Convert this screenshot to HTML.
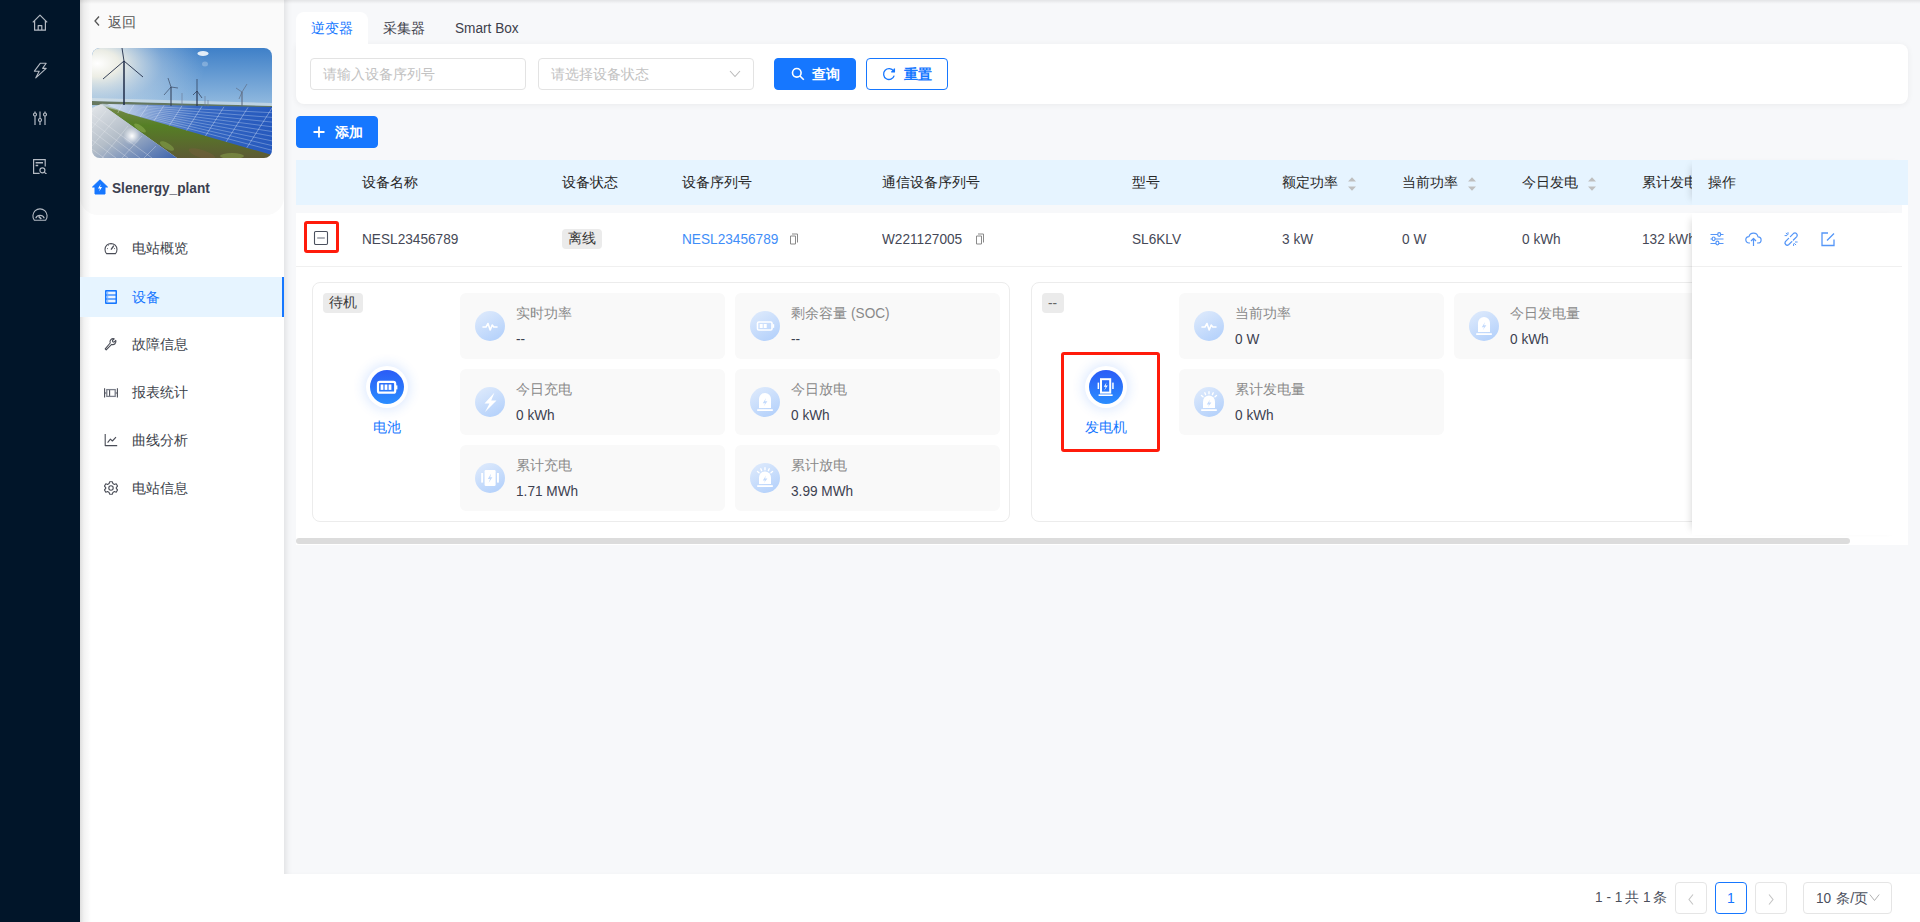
<!DOCTYPE html>
<html><head><meta charset="utf-8">
<style>
*{box-sizing:border-box;margin:0;padding:0}
html,body{width:1920px;height:922px;overflow:hidden}
body{font-family:"Liberation Sans",sans-serif;font-size:14px;color:#333;background:#f7f8fa;position:relative}
.abs{position:absolute}
.l{display:inline-block;font-size:15.5px;transform:scaleX(.88);transform-origin:0 50%;white-space:nowrap}
#dark{left:0;top:0;width:80px;height:922px;background:#011529}
#dark svg{position:absolute;left:32px;width:16px;height:16px}
#panel{left:80px;top:0;width:204px;height:922px;background:#fff}
#pshadow{left:80px;top:0;width:12px;height:922px;background:linear-gradient(90deg,rgba(0,0,0,.13),rgba(0,0,0,.05) 4px,rgba(0,0,0,0) 11px)}
#topblk{left:80px;top:0;width:204px;height:215px;background:#fafafa;border-radius:0 0 18px 18px}
#content{left:284px;top:0;width:1636px;height:874px;background:#f7f8fa;box-shadow:inset 6px 0 6px -4px rgba(0,0,0,.10)}
#topshadow{left:80px;top:0;width:1840px;height:4px;background:linear-gradient(rgba(0,0,0,.07),rgba(0,0,0,0))}
#footer{left:284px;top:874px;width:1636px;height:48px;background:#fff}
.menu{position:absolute;left:80px;width:204px;height:40px}
.menu .t{position:absolute;left:52px;top:0;line-height:40px;font-size:14px;color:#3c3f4a}
.menu svg{position:absolute;left:24px;top:13px;width:14px;height:14px}
.menu.sel{background:#e6f4ff;border-right:2px solid #1677ff}
.menu.sel .t{color:#1677ff}
.card{background:#fff;border-radius:8px}
.inp{position:absolute;border:1px solid #e3e3e3;border-radius:4px;background:#fff;height:32px}
.inp .ph{position:absolute;left:12px;top:0;line-height:30px;color:#c2c2c2;font-size:14px}
.btn{position:absolute;height:32px;border-radius:4px;line-height:30px;font-size:14px}
.th{position:absolute;top:160px;line-height:45px;font-size:14px;color:#262626}
.td{position:absolute;top:213px;line-height:52px;font-size:14px;color:#454856}
.sort{display:inline-block;position:absolute;width:8px;height:14px}
.mbox{position:absolute;width:265px;height:66px;background:#f9f9f9;border-radius:6px}
.mbox .ic{position:absolute;left:15px;top:18px;width:30px;height:30px;border-radius:50%;background:linear-gradient(150deg,#dce9fc 10%,#b4d1fb 90%)}
.mbox .ic svg{position:absolute;left:0;top:0;width:30px;height:30px}
.mbox .lb{position:absolute;left:56px;top:10px;line-height:20px;color:#8a8a8a;font-size:14px}
.mbox .vl{position:absolute;left:56px;top:36px;line-height:20px;color:#3c4150;font-size:14px}
.tag{position:absolute;height:20px;background:#ebebeb;border-radius:4px;line-height:19px;font-size:14px;color:#3a3a3a;text-align:center}
.bigic{position:absolute;width:42px;height:42px;border-radius:50%;background:#fff;box-shadow:0 0 12px 2px rgba(40,120,255,.16)}
.bigic .in{position:absolute;left:4px;top:4px;width:34px;height:34px;border-radius:50%;background:linear-gradient(180deg,#2b5cf6,#2a8dff)}
.pg{position:absolute;top:882px;height:32px;border:1px solid #e5e5e5;border-radius:4px;background:#fff;text-align:center;line-height:30px}
</style></head><body>

<div id="dark" class="abs">
<svg style="top:14px;overflow:visible" viewBox="0 0 16 16" fill="none" stroke="#b4bac3" stroke-width="1.2" stroke-linejoin="round"><path d="M0.8 8.4 L8 1.2 L15.2 8.4 M2.6 6.8 V16.2 H13.4 V6.8 M6.2 16.2 V11.6 H9.8 V16.2"/></svg>
<svg style="top:62px;overflow:visible" viewBox="0 0 16 16" fill="none" stroke="#b4bac3" stroke-width="1.1" stroke-linejoin="round"><path d="M8.4 1.2 H14.2 L10.6 6.4 H14.2 L3.8 15.8 L7.2 9.2 H2.4 Z"/></svg>
<svg style="top:110px" viewBox="0 0 16 16" fill="none" stroke="#b4bac3" stroke-width="1.2"><path d="M3 1.5V15 M8 1.5V15 M13 1.5V15"/><circle cx="3" cy="4.5" r="1.5" fill="#011529"/><circle cx="8" cy="10" r="1.5" fill="#011529"/><circle cx="13" cy="4.5" r="1.5" fill="#011529"/></svg>
<svg style="top:158px" viewBox="0 0 16 16" fill="none" stroke="#b4bac3" stroke-width="1.2"><path d="M7.6 15.4H1.6V1.6H13.2V8.6"/><path d="M3.6 4.8H11 M3.6 7.6H6.2" stroke-width="1.5"/><circle cx="10.4" cy="12.3" r="2.5"/><path d="M12.2 14.1L14.6 16.2"/></svg>
<svg style="top:206px" viewBox="0 0 16 16" fill="none" stroke="#b4bac3" stroke-width="1.1"><path d="M2.3 14.2 A7.1 7.1 0 1 1 13.7 14.2 Z"/><path d="M3.7 12.2 A4.7 4.7 0 0 1 12.3 12.2"/><path d="M9.3 13 L6.6 10.4" stroke-width="1.6"/></svg>
</div>
<div id="panel" class="abs"></div>
<div id="topblk" class="abs"></div>
<div id="content" class="abs"></div>
<div id="topshadow" class="abs"></div>
<div id="pshadow" class="abs"></div>
<div id="footer" class="abs"></div>
<!-- sidebar content -->
<svg class="abs" style="left:93px;top:15px;width:8px;height:12px" viewBox="0 0 8 12" fill="none" stroke="#555" stroke-width="1.3"><path d="M6 1.5 L2 6 L6 10.5"/></svg>
<div class="abs" style="left:108px;top:12px;line-height:20px;font-size:14px;color:#555">返回</div>
<div class="abs" style="left:92px;top:48px;width:180px;height:110px;border-radius:8px;overflow:hidden">
<svg width="180" height="110" viewBox="0 0 180 110">
<defs>
<linearGradient id="sky" x1="0" y1="0" x2="0" y2="1"><stop offset="0" stop-color="#3f80c8"/><stop offset=".5" stop-color="#8fb8de"/><stop offset="1" stop-color="#e0e8ea"/></linearGradient>
<radialGradient id="sun" cx="0.03" cy="0.14" r="0.6"><stop offset="0" stop-color="#ffffff"/><stop offset=".2" stop-color="#f4f2e6" stop-opacity=".95"/><stop offset=".6" stop-color="#dfe6ea" stop-opacity=".35"/><stop offset="1" stop-color="#cfe0ee" stop-opacity="0"/></radialGradient>
<linearGradient id="pan1" x1="0" y1="0" x2="1" y2="1"><stop offset="0" stop-color="#e4e7ea"/><stop offset=".45" stop-color="#b3bdc8"/><stop offset=".8" stop-color="#6683b6"/><stop offset="1" stop-color="#3f64ad"/></linearGradient>
<linearGradient id="pan2" x1="0" y1="0" x2="1" y2="0"><stop offset="0" stop-color="#cdd8e6"/><stop offset=".25" stop-color="#7a9ad0"/><stop offset=".55" stop-color="#3567c2"/><stop offset="1" stop-color="#2659bd"/></linearGradient>
<linearGradient id="grn" x1="0" y1="0" x2="0" y2="1"><stop offset="0" stop-color="#7a8a50"/><stop offset=".4" stop-color="#557f25"/><stop offset="1" stop-color="#5d5a34"/></linearGradient>
</defs>
<rect width="180" height="110" fill="url(#sky)"/>
<rect width="180" height="110" fill="url(#sun)"/>
<g fill="#fff"><ellipse cx="111" cy="5.5" rx="5.5" ry="2.5" opacity=".85"/><ellipse cx="113" cy="16" rx="3" ry="2.5" opacity=".25"/></g>
<path d="M0 53 L180 58 L180 61 L0 57Z" fill="#5a6a48" opacity=".85"/><path d="M0 50 L180 55 L180 58 L0 53Z" fill="#e8ecea" opacity=".5"/>
<path d="M9 56 L34 64 L180 106 L180 110 L85 110 Z" fill="url(#grn)"/>
<ellipse cx="48" cy="80" rx="7" ry="2.5" fill="#9cbc5a" opacity=".45" transform="rotate(35 48 80)"/><ellipse cx="75" cy="98" rx="8" ry="3" fill="#93b452" opacity=".45" transform="rotate(30 75 98)"/><ellipse cx="110" cy="106" rx="14" ry="4" fill="#7c5f3e" opacity=".4" transform="rotate(18 110 106)"/><ellipse cx="140" cy="108" rx="12" ry="3" fill="#92b04e" opacity=".45"/>
<path d="M15 56 L180 59 L180 107 L34 65 Z" fill="url(#pan2)"/>
<path d="M9.6 56.1 L180 64.7 M9.6 56.3 L180 69.4 M9.6 56.5 L180 74.1 M9.6 56.7 L180 78.8 M9.6 56.9 L180 83.5 M9.6 57.2 L180 88.2 M9.6 57.4 L180 92.9 M9.6 57.6 L180 97.6 M9.6 57.8 L180 102.3 " stroke="#d8e6fa" stroke-width=".45" opacity=".75" fill="none"/>
<path d="M30.0 56.4 L25.8 65.0 M42.0 56.7 L36.1 65.6 M56.0 57.0 L48.2 69.1 M72.0 57.4 L61.9 73.0 M90.0 57.8 L77.4 77.5 M110.0 58.3 L94.6 82.4 M132.0 58.8 L113.5 87.9 M156.0 59.4 L134.2 93.8 M180.0 60.0 L154.8 99.8 " stroke="#e2ecfb" stroke-width=".5" opacity=".8" fill="none"/>
<path d="M0 60 L9 56 L85 110 L0 110 Z" fill="url(#pan1)"/>
<path d="M0 66 L60 110 M0 74 L48 110 M0 83 L36 110 M0 92 L24 110 M0 101 L12 110 M4 58 L0 64 M14 63 L0 80 M24 70 L0 98 M36 78 L10 110 M50 88 L30 110 M64 98 L52 110" stroke="#eef2f6" stroke-width=".45" opacity=".7" fill="none"/>
<radialGradient id="glare" cx=".5" cy=".5" r=".5"><stop offset="0" stop-color="#fff"/><stop offset="1" stop-color="#fff" stop-opacity="0"/></radialGradient>
<circle cx="40" cy="88" r="9" fill="url(#glare)"/>
<g fill="none">
<path d="M32 13 V57" stroke="#1f2d48" stroke-width="1.5"/><path d="M32 13 L30 0 M32 13 L11 31 M32 13 L51 29" stroke="#1f2d48" stroke-width=".9"/>
<path d="M79 39 V58" stroke="#2f3b52" stroke-width="1"/><path d="M79 39 L76 30 M79 39 L72 47 M79 39 L86 40" stroke="#2f3b52" stroke-width=".6"/>
<path d="M105 43 V58" stroke="#2a3650" stroke-width="1.2"/><path d="M105 43 L105 31 M105 43 L101 47 M105 43 L110 50" stroke="#2a3650" stroke-width=".7"/>
<path d="M150 44 V58" stroke="#5a6578" stroke-width="1"/><path d="M150 44 L155 36 M150 44 L144 40 M150 44 L147 51" stroke="#5a6578" stroke-width=".6"/>
<path d="M113 48 V59 M90 45 V58 M116 52 V59" stroke="#6a7590" stroke-width=".6"/>
</g>
</svg></div>
<svg class="abs" style="left:92px;top:179px;width:16px;height:16px" viewBox="0 0 16 16"><path d="M8 0.8 L15.5 8 H13 V15 H3 V8 H0.5 Z" fill="#1677ff" stroke="#1677ff" stroke-width="1" stroke-linejoin="round"/><path d="M8.8 5 L6 9.5 H8 L7.2 12.5 L10 8 H8 Z" fill="#fff"/></svg>
<div class="abs" style="left:112px;top:178px;line-height:20px;font-size:14px;font-weight:bold;color:#3c4150"><span class="l">Slenergy_plant</span></div>

<div class="menu" style="top:228px"><svg viewBox="0 0 14 14" fill="none" stroke="#4a4d57" stroke-width="1.1"><path d="M2.6 12.6 A6 6 0 1 1 11.4 12.6 Z"/><path d="M7 8.6 L9.6 5" stroke-width="1.3"/><path d="M3.2 7.6H4 M4.3 4.3L4.8 4.8 M7 2.8V3.5 M9.8 4.3L9.3 4.8 M10 7.6H10.8" stroke-width="1"/></svg><div class="t">电站概览</div></div>
<div class="menu sel" style="top:277px"><svg viewBox="0 0 14 14"><rect x="1" y="0" width="12" height="14" rx="1" fill="#1677ff"/><rect x="2.5" y="1.6" width="9" height="2.8" fill="#ffffff" opacity=".92"/><rect x="2.5" y="5.6" width="9" height="2.8" fill="#ffffff" opacity=".92"/><rect x="2.5" y="9.6" width="9" height="2.8" fill="#ffffff" opacity=".92"/><rect x="3.2" y="2.5" width="1" height="1" fill="#1677ff"/><rect x="3.2" y="6.5" width="1" height="1" fill="#1677ff"/><rect x="3.2" y="10.5" width="1" height="1" fill="#1677ff"/></svg><div class="t">设备</div></div>
<div class="menu" style="top:324px"><svg viewBox="0 0 14 14" fill="none" stroke="#4a4d57" stroke-width="1.1" stroke-linejoin="round"><path d="M1.2 11.8 L2.2 12.8 L7.6 7.4 A3.2 3.2 0 0 0 11.8 3.4 L10 5.2 L8.8 4.8 L8.4 3.6 L10.2 1.8 A3.2 3.2 0 0 0 6.2 6 Z"/></svg><div class="t">故障信息</div></div>
<div class="menu" style="top:372px"><svg viewBox="0 0 14 14" fill="none" stroke="#4a4d57" stroke-width="1.1"><path d="M0.6 3.2V12.6 M13.4 3.2V12.6 M0.6 8H2.8 M11.2 8H13.4 M5.6 4.6V11.4"/><rect x="2.8" y="4.6" width="8.4" height="6.8" stroke="#7d818c" stroke-width="1.3"/></svg><div class="t">报表统计</div></div>
<div class="menu" style="top:420px"><svg viewBox="0 0 14 14" fill="none" stroke="#4a4d57" stroke-width="1.1" stroke-linejoin="round"><path d="M1.2 1V12.6H13.2 M3.6 9.6 L6.4 6.2 L8.4 8 L12 4.2"/></svg><div class="t">曲线分析</div></div>
<div class="menu" style="top:468px"><svg viewBox="0 0 14 14" fill="none" stroke="#4a4d57" stroke-width="1.1" stroke-linejoin="round"><path d="M5.6 0.8H8.4L8.9 2.6L10.4 3.4L12.2 2.8L13.6 5.2L12.3 6.5V7.5L13.6 8.8L12.2 11.2L10.4 10.6L8.9 11.4L8.4 13.2H5.6L5.1 11.4L3.6 10.6L1.8 11.2L0.4 8.8L1.7 7.5V6.5L0.4 5.2L1.8 2.8L3.6 3.4L5.1 2.6Z"/><circle cx="7" cy="7" r="2.2"/></svg><div class="t">电站信息</div></div>


<!-- main content -->
<div class="abs card" style="left:296px;top:44px;width:1612px;height:60px;border-radius:0 8px 8px 8px;box-shadow:0 1px 6px rgba(0,0,0,.06)"></div>
<div class="abs card" style="left:296px;top:12px;width:72px;height:44px;border-radius:8px 8px 0 0"></div>
<div class="abs" style="left:311px;top:18px;line-height:20px;color:#1677ff">逆变器</div>
<div class="abs" style="left:383px;top:18px;line-height:20px;color:#3d404b">采集器</div>
<div class="abs" style="left:455px;top:18px;line-height:20px;color:#3d404b"><span class="l">Smart Box</span></div>
<div class="inp" style="left:310px;top:58px;width:216px"><div class="ph">请输入设备序列号</div></div>
<div class="inp" style="left:538px;top:58px;width:216px"><div class="ph">请选择设备状态</div>
<svg class="abs" style="left:190px;top:11px;width:12px;height:8px" viewBox="0 0 12 8" fill="none" stroke="#bbb" stroke-width="1.1"><path d="M1 1 L6 6.5 L11 1"/></svg></div>
<div class="btn" style="left:774px;top:58px;width:82px;background:#1677ff;border:1px solid #1677ff;color:#fff">
<svg class="abs" style="left:16px;top:8px;width:14px;height:14px" viewBox="0 0 14 14" fill="none" stroke="#fff" stroke-width="1.6"><circle cx="5.8" cy="5.8" r="4.3"/><path d="M9 9 L12.8 12.8"/></svg>
<span class="abs" style="left:37px;top:0;font-weight:600">查询</span></div>
<div class="btn" style="left:866px;top:58px;width:82px;background:#fff;border:1px solid #1677ff;color:#1677ff">
<svg class="abs" style="left:15px;top:8px;width:14px;height:14px" viewBox="0 0 14 14" fill="none" stroke="#1677ff" stroke-width="1.3"><path d="M11.6 4.2 A5.4 5.4 0 1 0 12.2 8.6"/><path d="M12.4 1.6 V4.9 H9.2" fill="#1677ff" stroke-linejoin="round"/></svg>
<span class="abs" style="left:37px;top:0;font-weight:600">重置</span></div>

<div class="btn" style="left:296px;top:116px;width:82px;background:#1677ff;border:1px solid #1677ff;color:#fff">
<svg class="abs" style="left:16px;top:9px;width:12px;height:12px" viewBox="0 0 12 12" fill="none" stroke="#fff" stroke-width="1.8"><path d="M6 0.5V11.5 M0.5 6H11.5"/></svg>
<span class="abs" style="left:38px;top:0;font-weight:600">添加</span></div>

<!-- table -->
<div class="abs" style="left:296px;top:160px;width:1612px;height:45px;background:#e6f4ff"></div>
<div class="abs" style="left:296px;top:213px;width:1606px;height:54px;background:#fff;border-bottom:1px solid #f0f0f0"></div>
<div class="abs" style="left:296px;top:267px;width:1606px;height:278px;background:#fff"></div>
<div class="abs" style="left:1902px;top:205px;width:6px;height:340px;background:#fff"></div>
<div class="th" style="left:362px">设备名称</div>
<div class="th" style="left:562px">设备状态</div>
<div class="th" style="left:682px">设备序列号</div>
<div class="th" style="left:882px">通信设备序列号</div>
<div class="th" style="left:1132px">型号</div>
<div class="th" style="left:1282px">额定功率</div>
<div class="th" style="left:1402px">当前功率</div>
<div class="th" style="left:1522px">今日发电</div>
<div class="th" style="left:1642px">累计发电量</div>
<svg class="abs" style="left:1347px;top:176px;width:10px;height:16px" viewBox="0 0 10 16"><path d="M5 1.2 L9 5.6 H1Z M5 14.8 L9 10.4 H1Z" fill="#bfbfbf"/></svg>
<svg class="abs" style="left:1467px;top:176px;width:10px;height:16px" viewBox="0 0 10 16"><path d="M5 1.2 L9 5.6 H1Z M5 14.8 L9 10.4 H1Z" fill="#bfbfbf"/></svg>
<svg class="abs" style="left:1587px;top:176px;width:10px;height:16px" viewBox="0 0 10 16"><path d="M5 1.2 L9 5.6 H1Z M5 14.8 L9 10.4 H1Z" fill="#bfbfbf"/></svg>

<div class="abs" style="left:304px;top:221px;width:35px;height:32px;border:3px solid #ff1b0b;border-radius:3px"></div>
<svg class="abs" style="left:313px;top:230px;width:16px;height:16px" viewBox="0 0 16 16" fill="none" stroke="#4b505e" stroke-width="1.1"><rect x="1.5" y="1.5" width="13" height="13" rx="1.2"/><path d="M4.2 8H11.8" stroke="#858a96" stroke-width="1.3"/></svg>
<div class="td" style="left:362px"><span class="l">NESL23456789</span></div>
<div class="tag" style="left:562px;top:229px;width:40px">离线</div>
<div class="td" style="left:682px;color:#3f8ef8"><span class="l">NESL23456789</span></div>
<svg class="abs" style="left:789px;top:233px;width:10px;height:12px" viewBox="0 0 10 12" fill="none" stroke="#8a8a8a" stroke-width="1"><path d="M3 1H8.5V9.5 M1.5 3H6.5V11H1.5Z"/></svg>
<div class="td" style="left:882px"><span class="l">W221127005</span></div>
<svg class="abs" style="left:975px;top:233px;width:10px;height:12px" viewBox="0 0 10 12" fill="none" stroke="#8a8a8a" stroke-width="1"><path d="M3 1H8.5V9.5 M1.5 3H6.5V11H1.5Z"/></svg>
<div class="td" style="left:1132px"><span class="l">SL6KLV</span></div>
<div class="td" style="left:1282px"><span class="l">3 kW</span></div>
<div class="td" style="left:1402px"><span class="l">0 W</span></div>
<div class="td" style="left:1522px"><span class="l">0 kWh</span></div>
<div class="td" style="left:1642px"><span class="l">132 kWh</span></div>

<!-- expanded -->
<div class="abs" style="left:312px;top:282px;width:698px;height:240px;border:1px solid #ececec;border-radius:8px;background:#fff"></div>
<div class="tag" style="left:323px;top:293px;width:40px">待机</div>
<div class="bigic" style="left:366px;top:366px"><div class="in"><svg class="abs" style="left:0;top:0;width:34px;height:34px" viewBox="0 0 34 34"><rect x="8" y="11.9" width="17.2" height="10.8" rx="1.8" fill="none" stroke="#fff" stroke-width="2.2"/><rect x="25.8" y="15.4" width="1.6" height="4" fill="#fff"/><rect x="10.6" y="14.5" width="2.8" height="5.4" fill="#fff"/><rect x="14.6" y="14.5" width="2.8" height="5.4" fill="#fff"/><rect x="18.6" y="14.5" width="2.8" height="5.4" fill="#fff"/></svg></div></div>
<div class="abs" style="left:367px;top:417px;width:40px;text-align:center;line-height:20px;color:#1677ff">电池</div>
<div class="mbox" style="left:460px;top:293px"><div class="ic"><svg viewBox="0 0 30 30" fill="none" stroke="#fff" stroke-width="1.6" stroke-linejoin="round" stroke-linecap="round"><path d="M8 16H11L13 12.5L15.2 19L17.2 14L18.8 16H22"/></svg></div><div class="lb">实时功率</div><div class="vl"><span class="l">--</span></div></div>
<div class="mbox" style="left:735px;top:293px"><div class="ic"><svg viewBox="0 0 30 30"><rect x="7.5" y="11" width="14.5" height="8" rx="1.3" fill="none" stroke="#fff" stroke-width="1.6"/><rect x="22.6" y="13.2" width="1.6" height="3.6" fill="#fff"/><rect x="9.7" y="13" width="3" height="4" fill="#fff"/><rect x="13.7" y="13" width="3" height="4" fill="#fff"/></svg></div><div class="lb">剩余容量 <span class="l">(SOC)</span></div><div class="vl"><span class="l">--</span></div></div>
<div class="mbox" style="left:460px;top:369px"><div class="ic"><svg viewBox="0 0 30 30"><path d="M19.5 5.5L9.5 16.5H14.5L10 25L21.5 13.5H16.2Z" fill="#fff"/></svg></div><div class="lb">今日充电</div><div class="vl"><span class="l">0 kWh</span></div></div>
<div class="mbox" style="left:735px;top:369px"><div class="ic"><svg viewBox="0 0 30 30"><path d="M9 21V12A6 6 0 0 1 21 12V21Z" fill="#fff"/><rect x="7.2" y="22.2" width="15.6" height="1.8" fill="#fff"/><path d="M16 11L12.8 16.2H15.2L13.6 19.5L17.4 14.2H15Z" fill="#c3dafc"/></svg></div><div class="lb">今日放电</div><div class="vl"><span class="l">0 kWh</span></div></div>
<div class="mbox" style="left:460px;top:445px"><div class="ic"><svg viewBox="0 0 30 30"><rect x="9.6" y="7" width="11" height="16" rx="1.2" fill="#fff"/><rect x="6.2" y="10" width="1.9" height="9.6" fill="#fff"/><rect x="22" y="10" width="1.9" height="9.6" fill="#fff"/><path d="M16.2 10.5L12.8 16H15L13.6 20L17.4 14.2H15.2Z" fill="#c3dafc"/></svg></div><div class="lb">累计充电</div><div class="vl"><span class="l">1.71 MWh</span></div></div>
<div class="mbox" style="left:735px;top:445px"><div class="ic"><svg viewBox="0 0 30 30"><path d="M9 21V14.5A6 6 0 0 1 21 14.5V21Z" fill="#fff"/><rect x="7.2" y="22.2" width="15.6" height="1.8" fill="#fff"/><path d="M16 12.5L12.8 17.4H15.2L13.6 20.5L17.4 15.4H15Z" fill="#c3dafc"/><path d="M7.5 8.5L9 9.8 M10.8 5.8L11.6 7.6 M15 4.8V6.8 M19.2 5.8L18.4 7.6 M22.5 8.5L21 9.8" stroke="#fff" stroke-width="1.4" stroke-linecap="round"/></svg></div><div class="lb">累计放电</div><div class="vl"><span class="l">3.99 MWh</span></div></div>

<div class="abs" style="left:1031px;top:282px;width:698px;height:240px;border:1px solid #ececec;border-radius:8px;background:#fff"></div>
<div class="tag" style="left:1042px;top:293px;width:22px;color:#666"><span class="l">--</span></div>
<div class="bigic" style="left:1085px;top:366px"><div class="in"><svg class="abs" style="left:0;top:0;width:34px;height:34px" viewBox="0 0 34 34"><rect x="12" y="9.2" width="9.2" height="13.4" fill="none" stroke="#fff" stroke-width="2"/><rect x="8.6" y="12.6" width="1.5" height="6.4" fill="#fff"/><rect x="23.2" y="12.6" width="1.5" height="6.4" fill="#fff"/><rect x="9.6" y="24.4" width="14" height="1.6" fill="#fff"/><path d="M17.6 12.2L14.8 16.8H16.8L15.2 20.6L18.8 15.4H16.6Z" fill="#fff"/></svg></div></div>
<div class="abs" style="left:1076px;top:417px;width:60px;text-align:center;line-height:20px;color:#1677ff">发电机</div>
<div class="abs" style="left:1061px;top:352px;width:99px;height:100px;border:3px solid #ff1b0b;border-radius:3px"></div>
<div class="mbox" style="left:1179px;top:293px"><div class="ic"><svg viewBox="0 0 30 30" fill="none" stroke="#fff" stroke-width="1.6" stroke-linejoin="round" stroke-linecap="round"><path d="M8 16H11L13 12.5L15.2 19L17.2 14L18.8 16H22"/></svg></div><div class="lb">当前功率</div><div class="vl"><span class="l">0 W</span></div></div>
<div class="mbox" style="left:1454px;top:293px"><div class="ic"><svg viewBox="0 0 30 30"><path d="M9 21V12A6 6 0 0 1 21 12V21Z" fill="#fff"/><rect x="7.2" y="22.2" width="15.6" height="1.8" fill="#fff"/><path d="M16 11L12.8 16.2H15.2L13.6 19.5L17.4 14.2H15Z" fill="#c3dafc"/></svg></div><div class="lb">今日发电量</div><div class="vl"><span class="l">0 kWh</span></div></div>
<div class="mbox" style="left:1179px;top:369px"><div class="ic"><svg viewBox="0 0 30 30"><path d="M9 21V14.5A6 6 0 0 1 21 14.5V21Z" fill="#fff"/><rect x="7.2" y="22.2" width="15.6" height="1.8" fill="#fff"/><path d="M16 12.5L12.8 17.4H15.2L13.6 20.5L17.4 15.4H15Z" fill="#c3dafc"/><path d="M7.5 8.5L9 9.8 M10.8 5.8L11.6 7.6 M15 4.8V6.8 M19.2 5.8L18.4 7.6 M22.5 8.5L21 9.8" stroke="#fff" stroke-width="1.4" stroke-linecap="round"/></svg></div><div class="lb">累计发电量</div><div class="vl"><span class="l">0 kWh</span></div></div>

<!-- fixed op column -->
<div class="abs" style="left:1692px;top:160px;width:216px;height:45px;background:#e6f4ff;box-shadow:-6px 0 8px -6px rgba(0,0,0,.18)"></div>
<div class="abs" style="left:1692px;top:205px;width:210px;height:8px;background:#f7f8fa"></div>
<div class="abs" style="left:1692px;top:213px;width:210px;height:322px;background:#fff;box-shadow:-6px 0 8px -6px rgba(0,0,0,.18)"></div>
<div class="abs" style="left:1692px;top:266px;width:210px;height:1px;background:#f0f0f0"></div>
<div class="th" style="left:1708px">操作</div>
<svg class="abs" style="left:1709px;top:231px;width:16px;height:16px" viewBox="0 0 16 16" fill="none" stroke="#5596f7" stroke-width="1.2"><path d="M1.5 3.5H14.5 M1.5 8H14.5 M1.5 12.5H14.5"/><ellipse cx="10.2" cy="3.5" rx="1.5" ry="1.8" fill="#fff"/><ellipse cx="4.6" cy="7.8" rx="1.5" ry="1.8" fill="#fff"/><ellipse cx="8.4" cy="12" rx="1.5" ry="1.8" fill="#fff"/></svg>
<svg class="abs" style="left:1745px;top:231px;width:17px;height:16px" viewBox="0 0 17 16" fill="none" stroke="#5596f7" stroke-width="1.2" stroke-linejoin="round"><path d="M5 12H4A3.2 3.2 0 0 1 4 5.6A4.6 4.6 0 0 1 13 5.8A3.1 3.1 0 0 1 13 12H12"/><path d="M8.5 15V7.5 M6 10L8.5 7.5L11 10"/></svg>
<svg class="abs" style="left:1783px;top:231px;width:16px;height:16px" viewBox="0 0 16 16" fill="none" stroke="#5596f7" stroke-width="1.3" stroke-linecap="round"><path d="M7.4 5.6 L10.6 2.4 A2.3 2.3 0 0 1 13.8 5.6 L10.4 9"/><path d="M8.8 10.6 L5.6 13.8 A2.3 2.3 0 0 1 2.4 10.6 L5.6 7.4"/><path d="M3.2 2.2 L4.4 3.6 M2 4.6 H3.8 M5 1.6 V3.2 M11.6 12.6 L12.8 13.8 M12.4 11 H14.2 M10.6 13 V14.6" stroke-width="1"/></svg>
<svg class="abs" style="left:1820px;top:231px;width:16px;height:16px" viewBox="0 0 16 16" fill="none" stroke="#5596f7" stroke-width="1.3"><path d="M8 2H2V14.5H14V8.5 M7 9.5L14 2.5"/></svg>
<!-- scrollbar -->
<div class="abs" style="left:296px;top:538px;width:1554px;height:6px;background:#dcdcdc;border-radius:3px"></div>

<!-- pagination -->
<div class="abs" style="left:1595px;top:887px;line-height:20px;color:#4a4f5c"><span class="l">1 - 1</span></div><div class="abs" style="left:1625px;top:887px;line-height:20px;color:#4a4f5c">共</div><div class="abs" style="left:1643px;top:887px;line-height:20px;color:#4a4f5c"><span class="l">1</span></div><div class="abs" style="left:1653px;top:887px;line-height:20px;color:#4a4f5c">条</div>
<div class="pg" style="left:1675px;width:32px"><svg class="abs" style="left:11px;top:10px;width:8px;height:12px" viewBox="0 0 8 12" fill="none" stroke="#c4c4c4" stroke-width="1.1"><path d="M6 1.5L2 6.5L6 11.5"/></svg></div>
<div class="pg" style="left:1715px;width:32px;border-color:#1677ff;color:#1677ff">1</div>
<div class="pg" style="left:1755px;width:32px"><svg class="abs" style="left:11px;top:10px;width:8px;height:12px" viewBox="0 0 8 12" fill="none" stroke="#c4c4c4" stroke-width="1.1"><path d="M2 1.5L6 6.5L2 11.5"/></svg></div>
<div class="pg" style="left:1803px;width:89px;text-align:left;padding-left:12px;color:#4a4f5c"><span class="l">10</span><span style="margin-left:3px">条/页</span><svg class="abs" style="left:65px;top:10px;width:11px;height:9px" viewBox="0 0 11 9" fill="none" stroke="#b0b0b0" stroke-width="1"><path d="M0.8 1.5L5.5 7.5L10.2 1.5"/></svg></div>
</body></html>
